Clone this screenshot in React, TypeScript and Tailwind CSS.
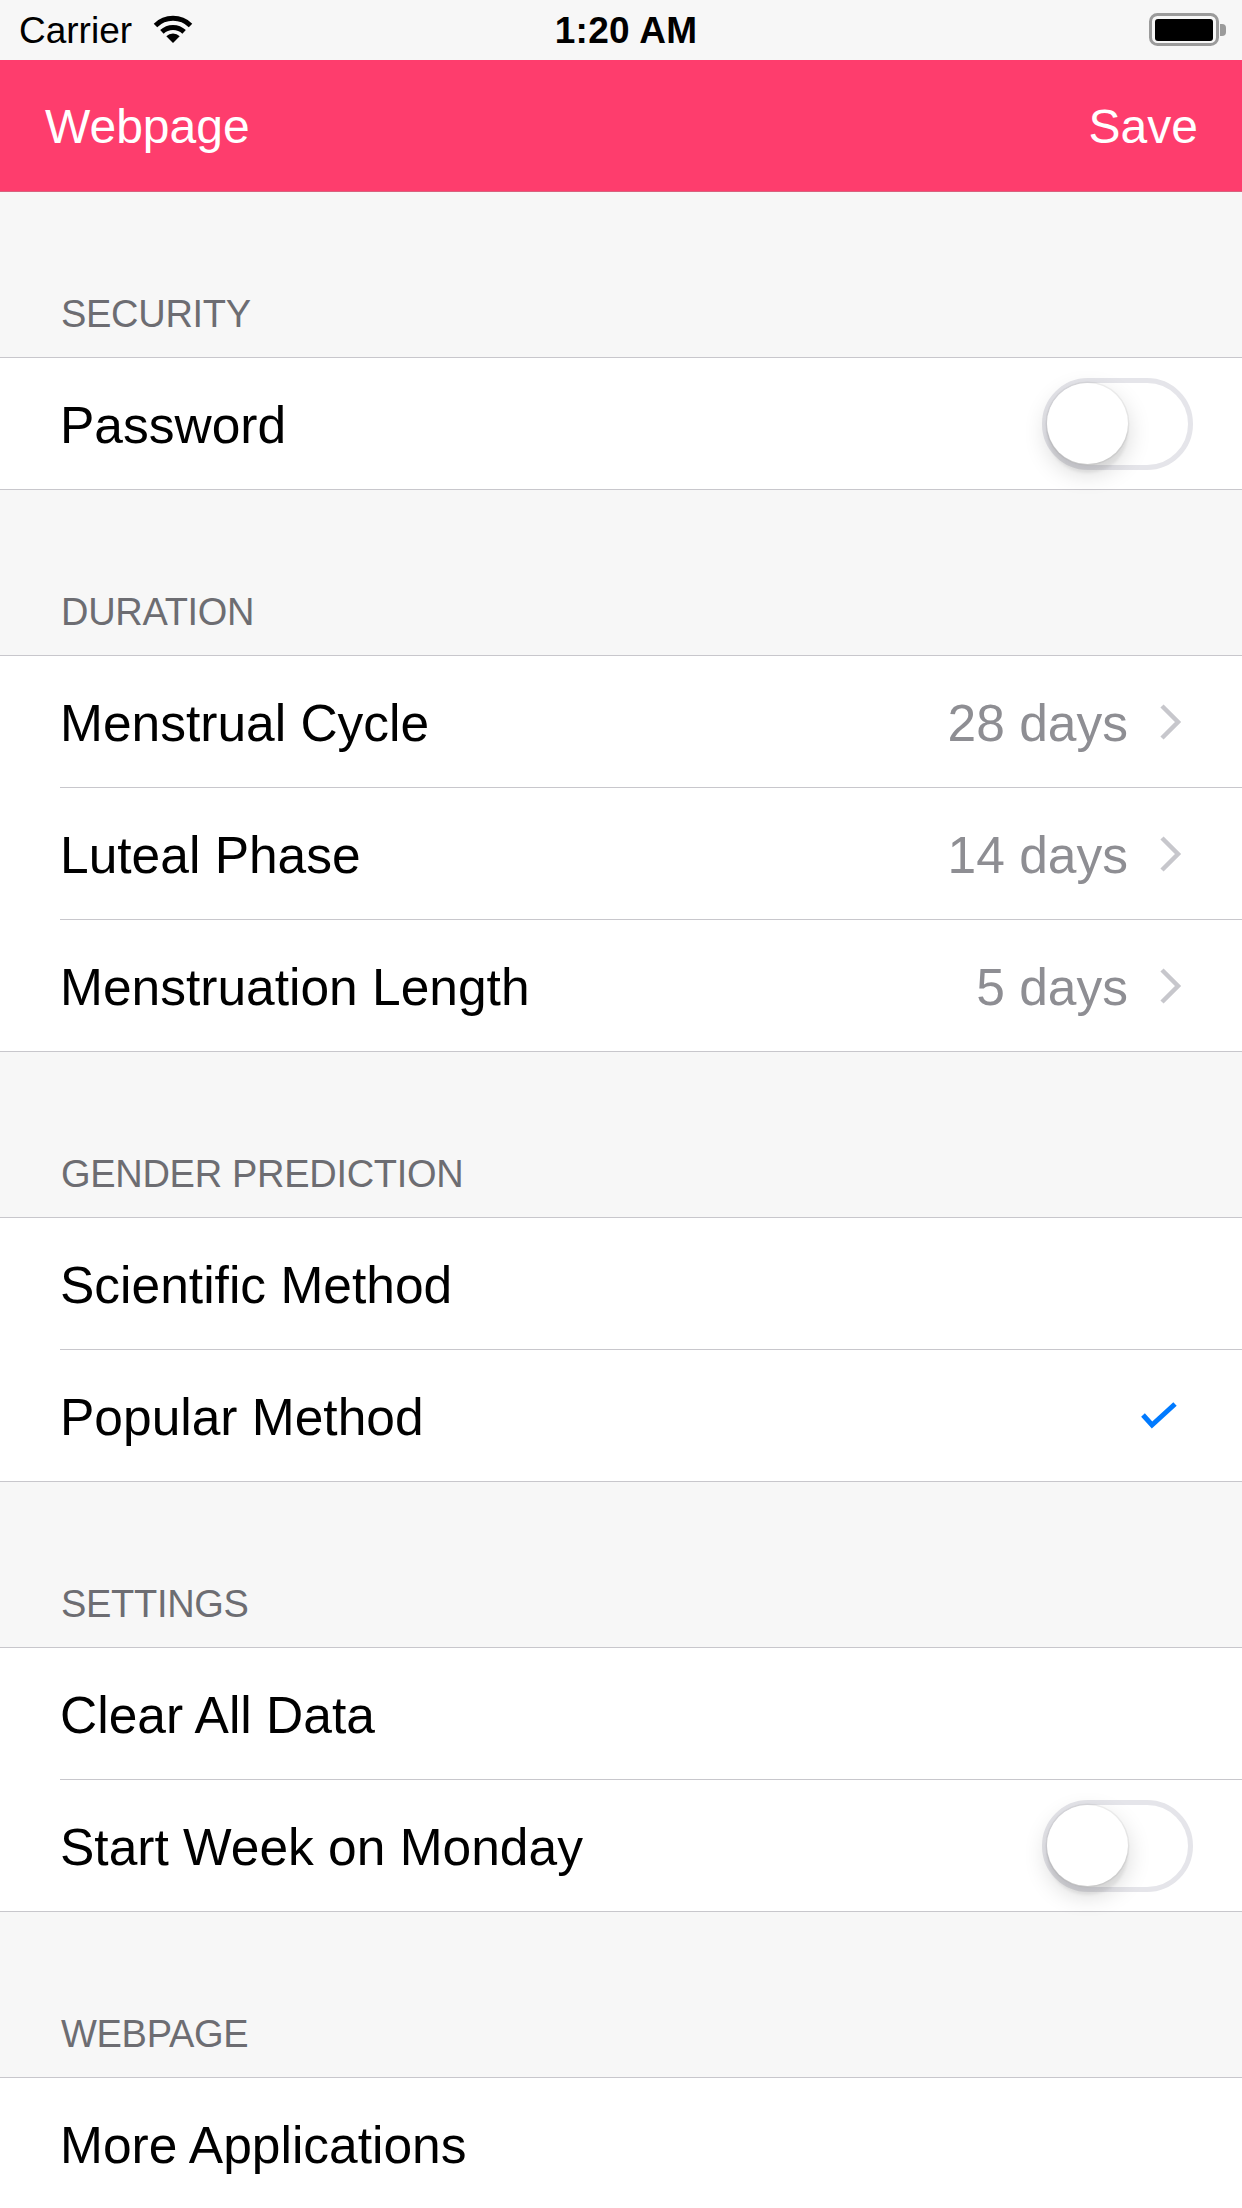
import React from "react";

type RowProps = {
  label: string;
  value?: string;
  chevron?: boolean;
  toggle?: boolean;
  check?: boolean;
  last?: boolean;
};

function WifiIcon() {
  return (
    <svg width="42" height="28" viewBox="0 0 42 28" className="block">
      <path d="M3.5 10.5 A25 25 0 0 1 38.5 10.5" fill="none" stroke="#000" strokeWidth="5" />
      <path d="M9.9 16.9 A16 16 0 0 1 32.1 16.9" fill="none" stroke="#000" strokeWidth="5" />
      <path d="M21 28 L14.3 21.3 A9.5 9.5 0 0 1 27.7 21.3 Z" fill="#000" />
    </svg>
  );
}

function BatteryIcon() {
  return (
    <svg width="78" height="34" viewBox="0 0 78 34" className="block">
      <rect x="1.5" y="1.5" width="67" height="30" rx="7" fill="none" stroke="#9b9b9b" strokeWidth="3" />
      <rect x="6" y="6" width="58" height="22" rx="3" fill="#000" />
      <path d="M71 11 L73 11 A4 4 0 0 1 77 15 L77 19 A4 4 0 0 1 73 23 L71 23 Z" fill="#9b9b9b" />
    </svg>
  );
}

function Chevron() {
  return (
    <svg width="23" height="38" viewBox="0 0 23 38" className="block">
      <polyline points="3,3 19,19 3,35" fill="none" stroke="#c7c7cc" strokeWidth="4.5" strokeLinejoin="miter" />
    </svg>
  );
}

function Check() {
  return (
    <svg width="38" height="29" viewBox="0 0 38 29" className="block">
      <polyline points="3,14 12,24 35,3" fill="none" stroke="#007aff" strokeWidth="5" strokeLinejoin="miter" />
    </svg>
  );
}

function Switch() {
  return (
    <div className="w-[151px] h-[92px] rounded-full border-[5px] border-[#e5e5ea] bg-white flex items-center">
      <div className="w-[81px] h-[81px] rounded-full bg-white shadow-[0_9px_3px_rgba(0,0,0,0.06),0_9px_24px_rgba(0,0,0,0.16),0_0_0_1.5px_rgba(0,0,0,0.05)]" />
    </div>
  );
}

function Row({ label, value, chevron, toggle, check, last }: RowProps) {
  const pad = toggle ? "pr-[49px]" : check ? "pr-[64px]" : "pr-[60px]";
  return (
    <div className="bg-white pl-[60px]">
      <div
        className={`flex items-center justify-between ${pad} ${
          last ? "h-[131px]" : "h-[132px] border-b border-[#c8c7cc]"
        }`}
      >
        <span className="text-[51.5px] text-black pt-[4px]">{label}</span>
        {value !== undefined && (
          <div className="flex items-center gap-[31px]">
            <span className="text-[51.5px] text-[#8e8e93] pt-[4px]">{value}</span>
            {chevron && <Chevron />}
          </div>
        )}
        {toggle && <Switch />}
        {check && <Check />}
      </div>
    </div>
  );
}

function Section({ title, children }: { title: string; children: React.ReactNode }) {
  return (
    <div>
      <div className="h-[165px] flex items-end pl-[61px] pb-[24px]">
        <span className="text-[38px] leading-[38px] text-[#6d6d72] tracking-[-0.3px]">{title}</span>
      </div>
      <div className="border-y border-[#c8c7cc] bg-white">{children}</div>
    </div>
  );
}

export default function App() {
  return (
    <div className="w-[1242px] h-[2208px] overflow-hidden bg-[#f7f7f7] font-['Liberation_Sans',Arial,sans-serif]">
      {/* status bar */}
      <div className="h-[60px] grid grid-cols-3 items-center bg-[#f7f7f7]">
        <div className="flex items-center pl-[19px]">
          <span className="text-[37px] leading-none text-black">Carrier</span>
          <div className="ml-[20px] -mt-[2px]">
            <WifiIcon />
          </div>
        </div>
        <div className="flex justify-center pl-[10px]">
          <span className="text-[37px] leading-none font-bold text-black tracking-[0.3px]">1:20 AM</span>
        </div>
        <div className="flex justify-end pr-[15px]">
          <BatteryIcon />
        </div>
      </div>

      {/* navigation bar */}
      <div className="h-[132px] bg-[#fe3d6d] border-b border-[#d8637f] flex items-center justify-between pl-[45px] pr-[44px]">
        <span className="text-[48px] text-white pt-[3px]">Webpage</span>
        <span className="text-[48px] text-white pt-[3px]">Save</span>
      </div>

      <Section title="SECURITY">
        <Row label="Password" toggle last />
      </Section>

      <Section title="DURATION">
        <Row label="Menstrual Cycle" value="28 days" chevron />
        <Row label="Luteal Phase" value="14 days" chevron />
        <Row label="Menstruation Length" value="5 days" chevron last />
      </Section>

      <Section title="GENDER PREDICTION">
        <Row label="Scientific Method" />
        <Row label="Popular Method" check last />
      </Section>

      <Section title="SETTINGS">
        <Row label="Clear All Data" />
        <Row label="Start Week on Monday" toggle last />
      </Section>

      <Section title="WEBPAGE">
        <Row label="More Applications" last />
      </Section>
    </div>
  );
}
